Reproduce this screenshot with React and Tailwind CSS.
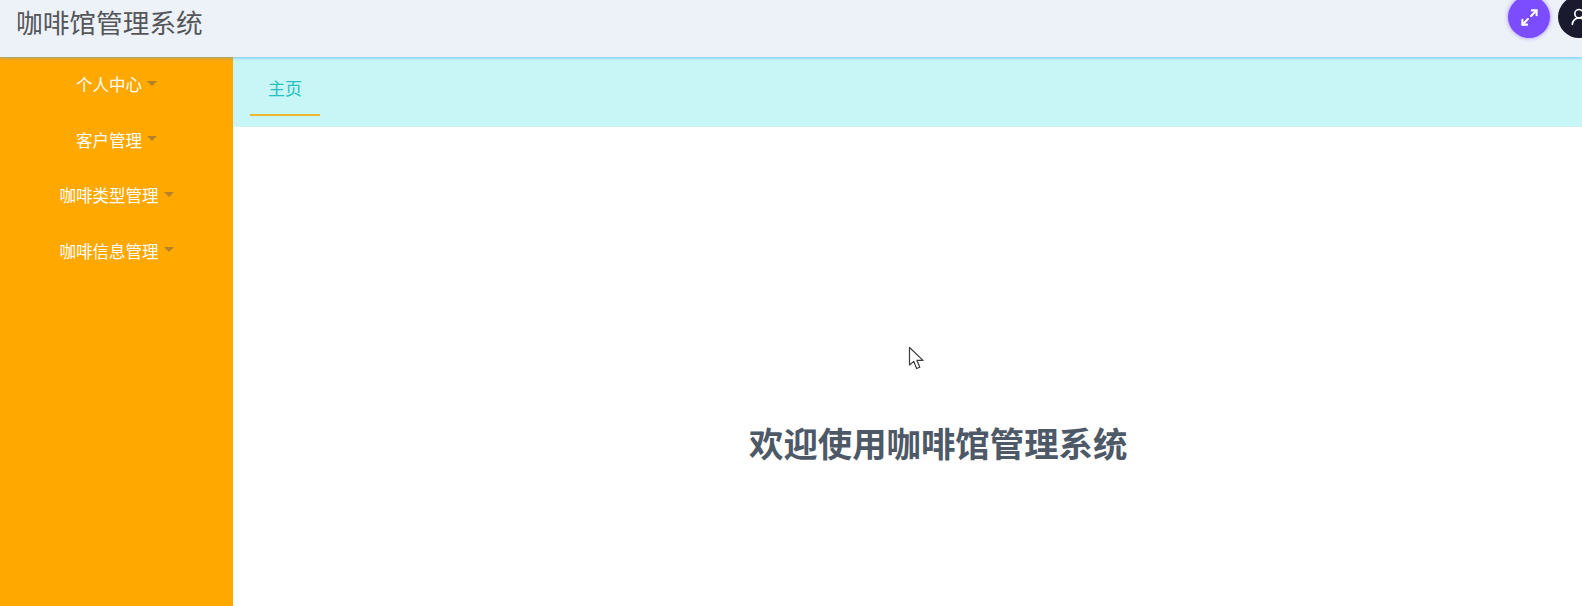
import React from 'react';
import { Maximize2, UserRound } from 'lucide-react';

const menus = ['个人中心', '客户管理', '咖啡类型管理', '咖啡信息管理'];

function Cursor() {
  return (
    <svg className="absolute left-[908px] top-[346px]" width="18" height="26" viewBox="0 0 18 26">
      <path d="M1.5 1.5 L1.5 19 L5.8 15.4 L8.6 22.5 L11.8 21.2 L9 14.4 L15 14.4 Z" fill="#fff" stroke="#3c3c3c" strokeWidth="1.2" strokeLinejoin="round" />
    </svg>
  );
}

export default function App() {
  return (
    <div className="relative w-[1582px] h-[606px] overflow-hidden bg-white font-['Noto_Sans_CJK_SC','Liberation_Sans',sans-serif]">
      <header className="relative z-10 h-[57px] bg-[#edf1f8] shadow-[0_1px_3px_rgba(64,158,255,0.6)] flex items-start justify-between overflow-hidden">
        <h1 className="pl-4 text-[26.7px] leading-[44px] font-normal text-[#55565a]">咖啡馆管理系统</h1>
        <div className="flex items-start gap-[4px] -mt-[4px] -mr-[18px]">
          <button className="w-[42px] h-[42px] rounded-full bg-[#7c4dff] shadow-[0_0_4px_rgba(124,77,255,0.6)] flex items-center justify-center text-white">
            <Maximize2 className="w-[19px] h-[19px]" strokeWidth={2.6} />
          </button>
          <button className="w-[42px] h-[42px] ml-[4px] rounded-full bg-[#1a1a2e] flex items-center justify-center text-white">
            <UserRound className="w-[20px] h-[20px]" strokeWidth={2} />
          </button>
        </div>
      </header>

      <div className="flex h-[549px]">
        <aside className="w-[233px] shrink-0 bg-[#ffa800] flex flex-col">
          {menus.map((m) => (
            <div key={m} className="h-[55.5px] flex items-center justify-center gap-[5px] text-white text-[16.5px]">
              <span>{m}</span>
              <span className="w-0 h-0 -mt-[3px] border-x-[5px] border-x-transparent border-t-[5px] border-t-[#b5812a]" />
            </div>
          ))}
        </aside>

        <main className="flex-1 flex flex-col">
          <div className="h-[70px] bg-[#c8f6f6] pl-[17px]">
            <div className="w-[70px] h-[59px] border-b-[2px] border-[#eeb62e] flex items-center justify-center pt-[5px] text-[17px] text-[#27c1c1]">
              主页
            </div>
          </div>
          <div className="flex-1 pt-[293px] pl-[516px]">
            <h2 className="text-[34.4px] leading-[44px] font-bold text-[#4e5968] whitespace-nowrap">欢迎使用咖啡馆管理系统</h2>
          </div>
        </main>
      </div>
      <Cursor />
    </div>
  );
}
